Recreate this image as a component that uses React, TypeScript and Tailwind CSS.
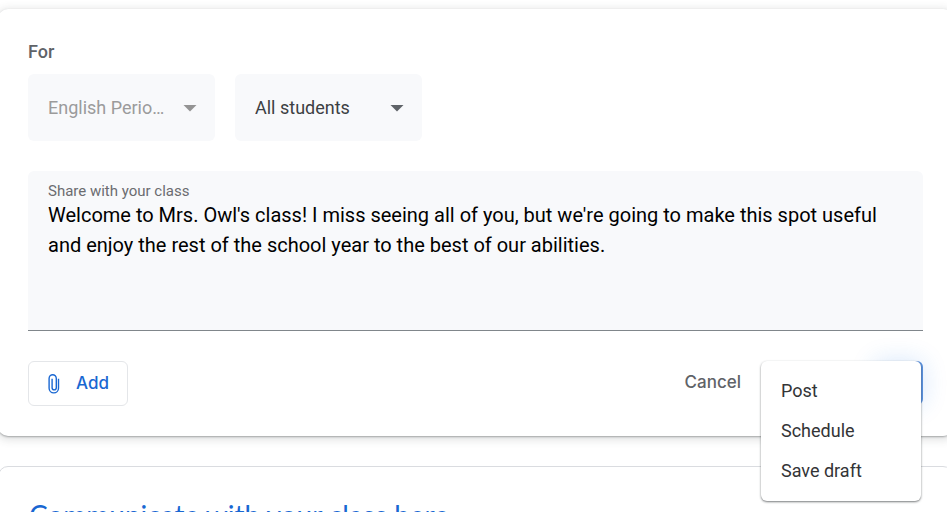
import React, { useState } from 'react';

const audiences = [
  { id: "course", label: "Course", value: "English Perio…", disabled: true },
  { id: "students", label: "Students", value: "All students", disabled: false },
];

const postActions = ["Post", "Schedule", "Save draft"];

function AudienceSelect({ id, label, value, disabled }: { id: string; label: string; value: string; disabled: boolean }) {
  return (
    <div className={`relative w-[187px] ${disabled ? 'text-[#9b9b9b]' : 'text-[#3c4043]'}`}>
      <select
        id={id}
        aria-label={label}
        disabled={disabled}
        className="w-full h-[67px] pl-5 pr-10 appearance-none rounded-md bg-[#f8f9fb] text-lg opacity-100 outline-none"
      >
        <option>{value}</option>
      </select>
      <svg
        viewBox="0 0 14 7"
        className={`absolute right-[18px] top-[31px] w-3.5 h-[7px] pointer-events-none ${disabled ? 'fill-[#949494]' : 'fill-[#5f6368]'}`}
      >
        <path d="M0.5 0h13L7 6.5z" />
      </svg>
    </div>
  );
}

export default function App() {
  const [message, setMessage] = useState(
    "Welcome to Mrs. Owl's class! I miss seeing all of you, but we're going to make this spot useful and enjoy the rest of the school year to the best of our abilities."
  );

  return (
    <div className="h-screen overflow-hidden bg-white pt-[9px] font-['Roboto',sans-serif]">
      {/* Announcement form */}
      <section className="-ml-0.5 -mr-1.5 px-[30px] pt-[31px] pb-[30px] rounded-[10px] bg-white shadow-[0_1px_2px_0_rgba(60,64,67,0.4),0_2px_8px_2px_rgba(60,64,67,0.15)]">
        <h2 className="text-lg leading-6 font-medium text-[#5f6368]">For</h2>

        <div className="flex gap-5 mt-2.5">
          {audiences.map((audience) => (
            <AudienceSelect key={audience.id} {...audience} />
          ))}
        </div>

        <div className="flex flex-col h-40 mt-[30px] px-5 pt-[11px] rounded-t-md border-b border-[#80868b] bg-[#f8f9fb]">
          <label htmlFor="message" className="text-[15px] leading-[18px] text-[#6b6c70]">Share with your class</label>
          <textarea
            id="message"
            value={message}
            onChange={(e) => setMessage(e.target.value)}
            className="flex-1 w-full resize-none bg-transparent text-xl leading-[30px] text-black outline-none"
          />
        </div>

        <div className="flex items-start justify-between mt-[30px]">
          <button className="flex items-center gap-3 h-[45px] pl-[15px] pr-[18px] rounded-md border border-[#e4e6e9] font-['Inter',sans-serif] text-[17px] font-medium text-[#1967d2]">
            <svg viewBox="0 0 20 20" className="w-5 h-5 fill-none stroke-current" strokeWidth="1.4">
              <path d="M14.5 4.8v9.4a4.7 4.7 0 0 1-9.4 0V4.4a3.6 3.6 0 0 1 7.2 0v9.4a2.1 2.1 0 0 1-4.2 0V4.8" />
            </svg>
            Add
          </button>

          <div className="flex items-center gap-5">
            <button className="font-['Inter',sans-serif] text-[17px] font-medium text-[#5f6368]">Cancel</button>
            <div className="relative flex justify-end w-[162px]">
              <button
                aria-label="More post options"
                className="w-12 h-11 rounded-r-md bg-[#5a92e0] shadow-[0_0_24px_0_rgba(26,115,232,0.18)]"
              />
              <ul className="absolute left-0 top-0 z-10 w-40 py-2.5 rounded-md bg-white shadow-[0_1px_2px_0_rgba(60,64,67,0.6),0_1px_3px_0_rgba(60,64,67,0.15)]">
                {postActions.map((action) => (
                  <li key={action}>
                    <button className="w-full h-10 px-5 text-left text-lg text-[#333436]">{action}</button>
                  </li>
                ))}
              </ul>
            </div>
          </div>
        </div>
      </section>

      {/* Stream post */}
      <section className="-ml-0.5 -mr-1.5 mt-[30px] px-[30px] pt-[30px] pb-[30px] rounded-[10px] border border-[#dadce0]">
        <h1 className="font-['Lato',sans-serif] text-[28px] leading-9 text-[#1967d2]">Communicate with your class here</h1>
      </section>
    </div>
  );
}
